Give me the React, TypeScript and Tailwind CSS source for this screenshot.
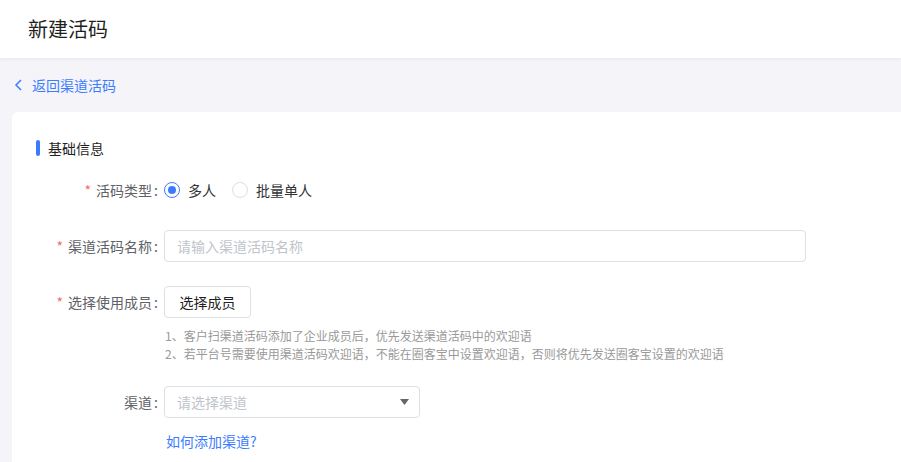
import { FC } from "react";

const FONT = {
  fontFamily: '"Noto Sans CJK SC", "Noto Sans", "Liberation Sans", sans-serif',
};

const Label: FC<{ text: string; required?: boolean }> = ({ text, required }) => (
  <div className="w-[152px] shrink-0 pr-[6px] text-right text-[14px] text-[#606266]">
    {required && <span className="mr-[5px] text-[#f56c6c]">*</span>}
    {text}
    <span className="ml-[2px]">:</span>
  </div>
);

export default function App() {
  return (
    <div className="min-h-[462px] bg-[#f5f5f9]" style={FONT}>
      <div className="relative z-10 flex h-[58px] items-center bg-white pl-[28px] shadow-[0_1px_4px_rgba(0,0,0,0.06)]">
        <h1 className="text-[20px] font-normal text-[#1f1f1f]">新建活码</h1>
      </div>

      <div className="flex h-[54px] items-center pl-[14px] text-[14px] text-[#3b7cff]">
        <svg width="10" height="12" viewBox="0 0 10 12" className="mr-[8px]">
          <path d="M7 1 L2 6 L7 11" fill="none" stroke="currentColor" strokeWidth="1.5" />
        </svg>
        返回渠道活码
      </div>

      <div className="ml-[12px] rounded-tl-[6px] bg-white pb-[20px] pl-[24px] pt-[28px]">
        <div className="flex h-[16px] items-center">
          <span className="h-[16px] w-[4px] rounded-[2px] bg-[#3b7cff]" />
          <span className="ml-[8px] text-[14px] text-[#1f1f1f]">基础信息</span>
        </div>

        <div className="-ml-[24px] mt-[18px] flex h-[32px] items-center">
          <Label text="活码类型" required />
          <label className="flex items-center">
            <span className="flex h-[16px] w-[16px] items-center justify-center rounded-full border border-[#3b7cff]">
              <span className="h-[8px] w-[8px] rounded-full bg-[#3b7cff]" />
            </span>
            <span className="ml-[8px] text-[14px] text-[#333]">多人</span>
          </label>
          <label className="ml-[16px] flex items-center">
            <span className="h-[16px] w-[16px] rounded-full border border-[#dcdfe6]" />
            <span className="ml-[8px] text-[14px] text-[#333]">批量单人</span>
          </label>
        </div>

        <div className="-ml-[24px] mt-[24px] flex h-[32px] items-center">
          <Label text="渠道活码名称" required />
          <input
            placeholder="请输入渠道活码名称"
            className="h-[32px] w-[642px] rounded-[4px] border border-[#dcdfe6] px-[12px] text-[14px] outline-none placeholder:text-[#c0c4cc]"
          />
        </div>

        <div className="-ml-[24px] mt-[24px] flex h-[32px] items-center">
          <Label text="选择使用成员" required />
          <button className="h-[32px] w-[87px] rounded-[4px] border border-[#dcdfe6] bg-white text-[14px] text-[#1f1f1f]">
            选择成员
          </button>
        </div>

        <div className="ml-[129px] mt-[9px] text-[12px] leading-[18px] text-[#999]">
          <p>1、客户扫渠道活码添加了企业成员后，优先发送渠道活码中的欢迎语</p>
          <p>2、若平台号需要使用渠道活码欢迎语，不能在圈客宝中设置欢迎语，否则将优先发送圈客宝设置的欢迎语</p>
        </div>

        <div className="-ml-[24px] mt-[23px] flex h-[32px] items-center">
          <Label text="渠道" />
          <div className="flex h-[32px] w-[256px] items-center justify-between rounded-[4px] border border-[#dcdfe6] pl-[12px] pr-[10px] text-[14px] text-[#c0c4cc]">
            <span>请选择渠道</span>
            <svg width="9" height="6" viewBox="0 0 9 6">
              <path d="M0 0 H9 L4.5 6 Z" fill="#666" />
            </svg>
          </div>
        </div>

        <div className="ml-[130px] mt-[13px] text-[14px] leading-[20px] text-[#3b7cff]">如何添加渠道?</div>
      </div>
    </div>
  );
}
